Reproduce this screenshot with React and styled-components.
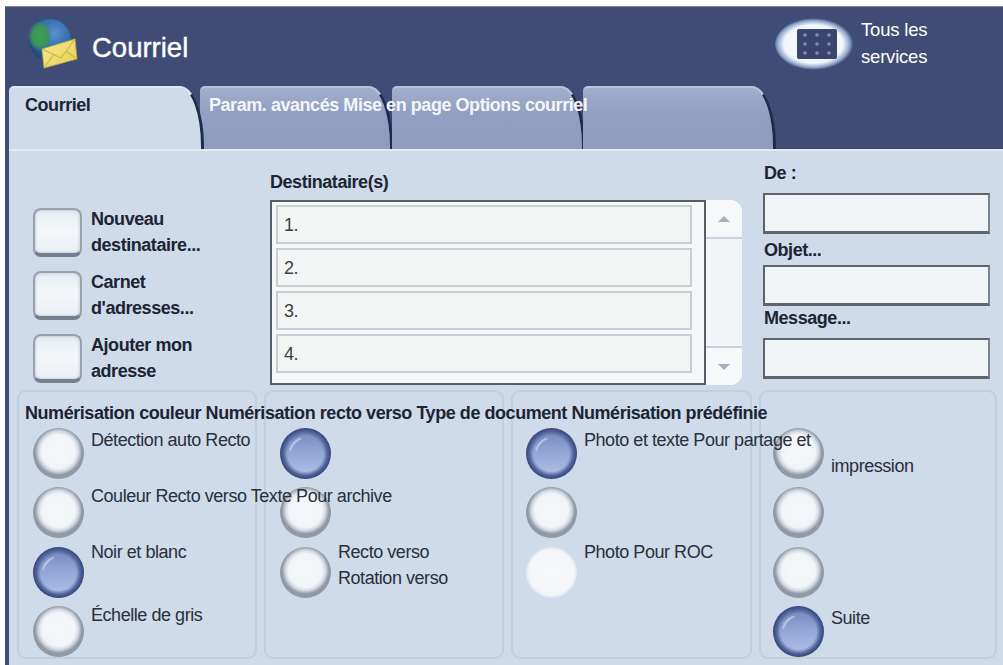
import React from 'react';
import styled, { createGlobalStyle, css } from 'styled-components';

const GlobalStyle = createGlobalStyle`
  html, body {
    margin: 0;
    padding: 0;
    background: #fff;
    overflow: hidden;
  }
  body {
    font-family: "Liberation Sans", Arial, sans-serif;
    font-size: 18px;
    letter-spacing: -0.45px;
  }
`;

const Screen = styled.div`
  width: 998px;
  height: 659px;
  margin: 6px 0 0 5px;
  background: #3e4c76;
  border-top: 1px solid #7c879f;
  box-sizing: border-box;
  display: flex;
  flex-direction: column;
  overflow: hidden;
`;

const Header = styled.header`
  height: 79px;
  flex: none;
  box-sizing: border-box;
  display: flex;
  align-items: flex-start;
  padding: 11px 70px 0 22px;
`;

const Title = styled.h1`
  margin: 13px 0 0 13px;
  font-size: 27.5px;
  line-height: 34px;
  font-weight: 400;
  letter-spacing: 0;
  color: #fff;
  -webkit-text-stroke: 0.4px #fff;
  flex: 1;
`;

const Services = styled.div`
  display: flex;
  align-items: flex-start;
`;

const ServicesText = styled.div`
  margin: -2px 0 0 6px;
  width: 72px;
  font-size: 18.5px;
  line-height: 27px;
  letter-spacing: -0.2px;
  color: #fff;
`;

const TabBar = styled.nav`
  height: 63px;
  flex: none;
  display: flex;
  padding-left: 4px;
`;

const Tab = styled.div`
  position: relative;
  box-sizing: border-box;
  width: ${p => p.$width}px;
  margin-left: ${p => p.$gap || 0}px;
  padding: 7px 0 0 ${p => (p.$active ? 16 : 9)}px;
  background: ${p => (p.$active ? '#cfdbe9' : 'linear-gradient(#a3aecb, #929fc2 40%, #8f9cbf)')};
  border-top: 2px solid ${p => (p.$active ? '#dfe7f0' : '#b9c3da')};
  border-right: 3px solid #1f2b4c;
  border-radius: 5px 24px 0 0 / 5px 60px 0 0;
  line-height: 20px;
  font-weight: 700;
  white-space: nowrap;
  color: ${p => (p.$active ? '#1d2433' : '#f3f5fa')};
  z-index: ${p => (p.$active ? 1 : 'auto')};
`;

const TabLabel = styled.span`
  position: relative;
  z-index: 3;
`;

const Content = styled.main`
  flex: 1;
  min-height: 0;
  margin-left: 4px;
  background: #cfdbe9;
  border-top: 2px solid #e2e9f2;
  display: flex;
  flex-direction: column;
  color: #1d2433;
`;

const Upper = styled.section`
  height: 239px;
  flex: none;
  display: flex;
`;

const Actions = styled.div`
  width: 261px;
  flex: none;
  box-sizing: border-box;
  padding: 57px 0 0 24px;
  display: flex;
  flex-direction: column;
  gap: 14px;
`;

const Action = styled.div`
  display: flex;
  gap: 9px;
  height: 49px;
`;

const SquareButton = styled.div`
  width: 49px;
  height: 49px;
  flex: none;
  box-sizing: border-box;
  border-radius: 8px;
  border: 2px solid #99a0ae;
  border-bottom: 4px solid #767e8f;
  box-shadow: inset 0 0 3px rgba(120, 130, 150, 0.5);
  background: linear-gradient(#e5edf2, #f4f7fa 45%, #ebf0f6);
`;

const ActionLabel = styled.div`
  line-height: 26px;
  font-weight: 700;
  margin-top: -2px;
  white-space: nowrap;
`;

const Recipients = styled.div`
  width: 494px;
  flex: none;
  padding-top: 21px;
  box-sizing: border-box;
`;

const FieldLabel = styled.div`
  line-height: 20px;
  font-weight: 700;
`;

const RecipientBox = styled.div`
  margin-top: 8px;
  display: flex;
  height: 185px;
  width: 472px;
`;

const RecipientList = styled.div`
  width: 436px;
  box-sizing: border-box;
  flex: none;
  border: 2px solid #585d68;
  background: #f5f7f8;
  padding: 3px 12px 0 4px;
  display: flex;
  flex-direction: column;
  gap: 4px;
`;

const RecipientRow = styled.div`
  height: 39px;
  box-sizing: border-box;
  border: 2px solid #c9ced3;
  padding: 7px 0 0 6px;
  line-height: 22px;
  color: #3b4048;
  background: #f4f5f5;
`;

const Scroller = styled.div`
  flex: 1;
  display: flex;
  flex-direction: column;
  justify-content: space-between;
  background: #f2f5f8;
  border-radius: 0 12px 12px 0;
  overflow: hidden;
`;

const ScrollArrow = styled.div`
  height: 37px;
  display: flex;
  align-items: center;
  justify-content: center;
  background: #f6f8f9;
  border-${p => (p.$down ? 'top' : 'bottom')}: 2px solid #c9d2dc;
  &::before {
    content: '';
    width: 0;
    height: 0;
    border-left: 6px solid transparent;
    border-right: 6px solid transparent;
    border-${p => (p.$down ? 'top' : 'bottom')}: 6px solid #a6afba;
  }
`;

const Sender = styled.div`
  flex: 1;
  padding-top: 12px;
  display: flex;
  flex-direction: column;
  align-items: flex-start;
`;

const SenderInput = styled.div`
  width: 227px;
  height: 41px;
  margin-left: -1px;
  flex: none;
  box-sizing: border-box;
  background: #f1f4f6;
  border: 2px solid #5e636c;
  border-bottom-width: 3px;
  border-right-color: #7d828b;
`;

const SenderLabel = styled(FieldLabel)`
  height: ${p => p.$height}px;
  line-height: ${p => p.$line}px;
`;

const Groups = styled.section`
  flex: 1;
  min-height: 0;
  display: flex;
  padding: 0 6px 0 8px;
  gap: 7px;
`;

const Group = styled.div`
  width: ${p => p.$width}px;
  height: 269px;
  flex: none;
  position: relative;
  box-sizing: border-box;
  border: 2px solid #c2cfde;
  border-radius: 9px;
  padding: 36px 0 0 ${p => p.$inset}px;
`;

const GroupTitle = styled.div`
  position: absolute;
  top: 11px;
  left: 6px;
  z-index: 4;
  line-height: 20px;
  font-weight: 700;
  white-space: nowrap;
`;

const Option = styled.div`
  height: 59.3px;
  display: flex;
  gap: 7px;
`;

const selected = css`
  background:
    radial-gradient(circle closest-side, rgba(52, 69, 120, 0) 70%, #52659b 86%, #34447a 100%),
    linear-gradient(#6f84b8, #94a8d8 50%, #b0c3ea);
  &::after {
    content: '';
    position: absolute;
    left: 9px;
    top: 9px;
    width: 33px;
    height: 33px;
    border-radius: 50%;
    border-top: 2px solid rgba(228, 235, 250, 0.6);
    box-sizing: border-box;
    transform: rotate(-48deg);
    filter: blur(0.4px);
    clip-path: polygon(25% 0, 75% 0, 75% 40%, 25% 40%);
  }
`;

const Radio = styled.div`
  position: relative;
  width: 51px;
  height: 51px;
  flex: none;
  box-sizing: border-box;
  border-radius: 50%;
  background: ${p =>
    p.$flat
      ? 'radial-gradient(circle closest-side, #f6f8fa 0, #f4f6f9 88%, #dfe5ec 100%)'
      : 'radial-gradient(circle closest-side at 50% 46%, #f6f8fa 0, #f2f5f8 72%, #d2d8e0 86%, #9299a6 100%)'};
  ${p => p.$on && selected}
`;

const OptionLabel = styled.div`
  position: relative;
  z-index: 3;
  line-height: ${p => p.$line || 25}px;
  color: #2a2f3a;
  white-space: nowrap;
  margin-top: ${p => p.$top ?? 0}px;
`;

const MailIcon = () => (
  <svg width="52" height="52" viewBox="0 0 52 52">
    <defs>
      <radialGradient id="globe" cx="0.6" cy="0.35" r="0.75">
        <stop offset="0" stopColor="#5f90d2" />
        <stop offset="0.55" stopColor="#2c6ba6" />
        <stop offset="1" stopColor="#1c3c6c" />
      </radialGradient>
      <radialGradient id="land" cx="0.5" cy="0.5" r="0.5">
        <stop offset="0" stopColor="#3fa25a" />
        <stop offset="0.65" stopColor="#3a9458" />
        <stop offset="1" stopColor="#3a9458" stopOpacity="0" />
      </radialGradient>
      <linearGradient id="env" x1="0" y1="0" x2="1" y2="1">
        <stop offset="0" stopColor="#f7ec90" />
        <stop offset="1" stopColor="#e6cc55" />
      </linearGradient>
    </defs>
    <circle cx="23" cy="22" r="21" fill="url(#globe)" />
    <ellipse cx="13" cy="18" rx="12" ry="15" fill="url(#land)" />
    <path d="M15 31 48 21 50 41 17 50z" fill="url(#env)" stroke="#b9a64a" strokeWidth="0.8" />
    <path d="M15 31 34 40 48 21M17 50 27 36M39 33 50 41" fill="none" stroke="#cdb545" strokeWidth="1.2" />
  </svg>
);

const ServicesIcon = () => (
  <svg width="80" height="52" viewBox="0 0 80 52">
    <defs>
      <radialGradient id="glow" cx="0.48" cy="0.5" r="0.5">
        <stop offset="0" stopColor="#ffffff" />
        <stop offset="0.74" stopColor="#f1f5fa" />
        <stop offset="0.9" stopColor="#8ea6cc" />
        <stop offset="1" stopColor="#3e4c76" />
      </radialGradient>
    </defs>
    <ellipse cx="40" cy="26" rx="40" ry="26" fill="url(#glow)" />
    <rect x="22" y="11" width="40" height="30" rx="2" fill="#39456c" />
    {[0, 1, 2].map(r =>
      [0, 1, 2].map(c => (
        <circle key={`${r}-${c}`} cx={30 + c * 12} cy={17 + r * 9} r="1.8" fill="#7f8eb5" />
      ))
    )}
  </svg>
);

const groups = [
  {
    width: 240,
    inset: 14,
    title: 'Numérisation couleur Numérisation recto verso Type de document Numérisation prédéfinie',
    options: [
      { label: 'Détection auto Recto', top: 0 },
      { label: 'Couleur Recto verso Texte Pour archive', top: -3 },
      { label: 'Noir et blanc', on: true, top: -7 },
      { label: 'Échelle de gris', top: -3 },
    ],
  },
  {
    width: 240,
    inset: 14,
    options: [
      { on: true },
      {},
      { label: ['Recto verso', 'Rotation verso'], top: -8, line: 26 },
    ],
  },
  {
    width: 241,
    inset: 13,
    options: [
      { label: 'Photo et texte Pour partage et', on: true, top: 0 },
      {},
      { label: 'Photo Pour ROC', flat: true, top: -7 },
    ],
  },
  {
    width: 238,
    inset: 12,
    options: [
      { label: 'impression', top: 26 },
      {},
      {},
      { label: 'Suite', on: true },
    ],
  },
];

const App = () => (
  <>
    <GlobalStyle />
    <Screen>
      <Header>
        <MailIcon />
        <Title>Courriel</Title>
        <Services>
          <ServicesIcon />
          <ServicesText>Tous les services</ServicesText>
        </Services>
      </Header>
      <TabBar>
        <Tab $active $width={195}>Courriel</Tab>
        <Tab $width={193} $gap={-4}>
          <TabLabel>Param. avancés Mise en page Options courriel</TabLabel>
        </Tab>
        <Tab $width={193} $gap={-1} />
        <Tab $width={193} $gap={-2} />
      </TabBar>
      <Content>
        <Upper>
          <Actions>
            <Action>
              <SquareButton />
              <ActionLabel>Nouveau<br />destinataire...</ActionLabel>
            </Action>
            <Action>
              <SquareButton />
              <ActionLabel>Carnet<br />d'adresses...</ActionLabel>
            </Action>
            <Action>
              <SquareButton />
              <ActionLabel>Ajouter mon<br />adresse</ActionLabel>
            </Action>
          </Actions>
          <Recipients>
            <FieldLabel>Destinataire(s)</FieldLabel>
            <RecipientBox>
              <RecipientList>
                {['1.', '2.', '3.', '4.'].map(n => (
                  <RecipientRow key={n}>{n}</RecipientRow>
                ))}
              </RecipientList>
              <Scroller>
                <ScrollArrow />
                <ScrollArrow $down />
              </Scroller>
            </RecipientBox>
          </Recipients>
          <Sender>
            <SenderLabel $height={30} $line={20}>De :</SenderLabel>
            <SenderInput />
            <SenderLabel $height={31} $line={32}>Objet...</SenderLabel>
            <SenderInput />
            <SenderLabel $height={32} $line={24}>Message...</SenderLabel>
            <SenderInput />
          </Sender>
        </Upper>
        <Groups>
          {groups.map((group, i) => (
            <Group key={i} $width={group.width} $inset={group.inset}>
              {group.title && <GroupTitle>{group.title}</GroupTitle>}
              {group.options.map((option, j) => (
                <Option key={j}>
                  <Radio $on={option.on} $flat={option.flat} />
                  {option.label && (
                    <OptionLabel $top={option.top} $line={option.line}>
                      {[].concat(option.label).map(line => (
                        <div key={line}>{line}</div>
                      ))}
                    </OptionLabel>
                  )}
                </Option>
              ))}
            </Group>
          ))}
        </Groups>
      </Content>
    </Screen>
  </>
);

export default App;
